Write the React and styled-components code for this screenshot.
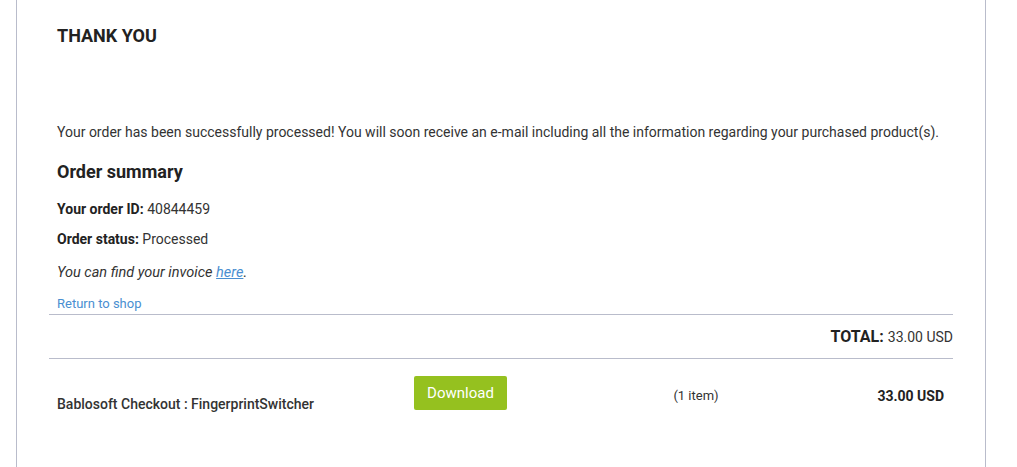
import React from "react";
import styled, { createGlobalStyle } from "styled-components";

const GlobalStyle = createGlobalStyle`
  html, body {
    margin: 0;
    padding: 0;
    background: #fff;
  }
  body {
    font-family: Roboto, "Liberation Sans", sans-serif;
    color: #333;
  }
`;

const Page = styled.div`
  padding: 0 31px 0 16px;
  height: 467px;
  box-sizing: border-box;
`;

const Card = styled.div`
  height: 100%;
  border-left: 1px solid #b9bccb;
  border-right: 1px solid #b9bccb;
  padding: 0 32px;
  box-sizing: border-box;
`;

const Inner = styled.div`
  padding: 0 8px 1px;
`;

const Title = styled.h1`
  margin: 0;
  padding-top: 25px;
  font-size: 18px;
  line-height: 22px;
  font-weight: 700;
  color: #222;
`;

const Message = styled.p`
  margin: 75px 0 0;
  font-size: 14px;
  line-height: 20px;
`;

const Heading = styled.h2`
  margin: 18px 0 0;
  font-size: 18px;
  line-height: 24px;
  font-weight: 700;
  color: #222;
`;

const Info = styled.p`
  margin: ${(p) => p.$gap}px 0 0;
  font-size: ${(p) => (p.$italic ? "14.5px" : "14px")};
  line-height: 20px;
  font-style: ${(p) => (p.$italic ? "italic" : "normal")};

  b {
    font-weight: 700;
    color: #222;
  }
`;

const InlineLink = styled.a`
  color: #4a8fd1;
  text-decoration: underline;
`;

const ShopLink = styled.a`
  display: block;
  margin-top: 12px;
  font-size: 13px;
  line-height: 18px;
  color: #4a8fd1;
  text-decoration: none;
`;

const Divider = styled.div`
  border-top: 1px solid #b9bccb;
`;

const TotalRow = styled.div`
  display: flex;
  justify-content: flex-end;
  align-items: baseline;
  gap: 4px;
  padding: 12px 0 11px;
  line-height: 20px;
`;

const TotalLabel = styled.span`
  font-size: 16px;
  font-weight: 700;
  color: #222;
`;

const TotalValue = styled.span`
  font-size: 14px;
`;

const ItemRow = styled.div`
  display: grid;
  grid-template-columns: 365px 220px 124px 1fr;
  align-items: start;
`;

const ItemName = styled.div`
  padding: 35px 0 0 8px;
  font-size: 14px;
  line-height: 20px;
  font-weight: 500;
  color: #333;
`;

const ButtonCell = styled.div`
  padding-top: 17px;
`;

const DownloadButton = styled.button`
  width: 93px;
  height: 34px;
  border: 0;
  border-radius: 2px;
  background: #95c11f;
  color: #fff;
  font-family: inherit;
  font-size: 15px;
  cursor: pointer;
`;

const ItemCount = styled.div`
  padding-top: 27px;
  text-align: center;
  font-size: 13px;
  line-height: 20px;
`;

const ItemPrice = styled.div`
  padding: 27px 9px 0 0;
  text-align: right;
  font-size: 14px;
  line-height: 20px;
  font-weight: 700;
  color: #222;
`;

export default function App() {
  return (
    <Page>
      <GlobalStyle />
      <Card>
        <Inner>
          <Title>THANK YOU</Title>
          <Message>
            Your order has been successfully processed! You will soon receive an e-mail including all the
            information regarding your purchased product(s).
          </Message>
          <Heading>Order summary</Heading>
          <Info $gap={15}>
            <b>Your order ID:</b> 40844459
          </Info>
          <Info $gap={10}>
            <b>Order status:</b> Processed
          </Info>
          <Info $gap={14} $italic>
            You can find your invoice <InlineLink href="#">here</InlineLink>.
          </Info>
          <ShopLink href="#">Return to shop</ShopLink>
        </Inner>
        <Divider />
        <TotalRow>
          <TotalLabel>TOTAL:</TotalLabel>
          <TotalValue>33.00 USD</TotalValue>
        </TotalRow>
        <Divider />
        <ItemRow>
          <ItemName>Bablosoft Checkout : FingerprintSwitcher</ItemName>
          <ButtonCell>
            <DownloadButton>Download</DownloadButton>
          </ButtonCell>
          <ItemCount>(1 item)</ItemCount>
          <ItemPrice>33.00 USD</ItemPrice>
        </ItemRow>
      </Card>
    </Page>
  );
}
